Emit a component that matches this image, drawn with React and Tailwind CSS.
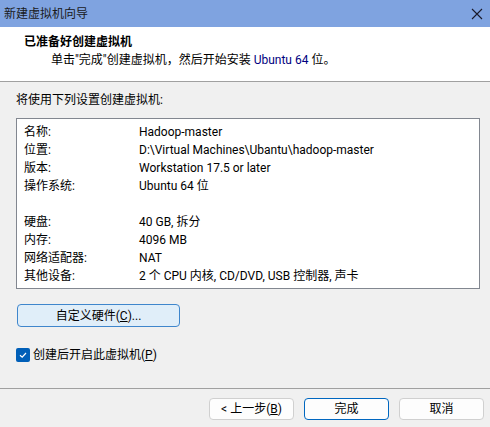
import React from "react";

const rows = [
  ["名称:", "Hadoop-master"],
  ["位置:", "D:\\Virtual Machines\\Ubantu\\hadoop-master"],
  ["版本:", "Workstation 17.5 or later"],
  ["操作系统:", "Ubuntu 64 位"],
  null,
  ["硬盘:", "40 GB, 拆分"],
  ["内存:", "4096 MB"],
  ["网络适配器:", "NAT"],
  ["其他设备:", "2 个 CPU 内核, CD/DVD, USB 控制器, 声卡"],
];

function Btn({ children, primary }) {
  return (
    <button
      className={
        primary
          ? "flex h-[22px] w-[85px] items-center justify-center rounded-[4px] border border-[#0067c0] bg-[#fdfdfd] text-[12px] text-black"
          : "flex h-[22px] w-[85px] items-center justify-center rounded-[4px] border border-[#d0d0d0] bg-[#fdfdfd] text-[12px] text-black"
      }
    >
      {children}
    </button>
  );
}

export default function App() {
  return (
    <div
      className="flex h-[427px] w-[490px] flex-col overflow-hidden bg-[#f0f0f0] text-[12px] text-black"
      style={{ fontFamily: 'Roboto, "Noto Sans CJK SC", sans-serif' }}
    >
      <div className="flex h-[27px] shrink-0 items-center justify-between bg-[#7fa3e0] pl-[4px] pr-[7px]">
        <span className="text-[12px] leading-none text-[#1a1a1a]">新建虚拟机向导</span>
        <svg width="12" height="12" viewBox="0 0 12 12">
          <path d="M1 1 L11 11 M11 1 L1 11" stroke="#1a1a2a" strokeWidth="1.1" />
        </svg>
      </div>

      <div className="h-[55px] shrink-0 border-b border-[#a0a0a0] bg-white pl-[24px] pt-[6px]">
        <div className="text-[12px] font-bold leading-[18px]">已准备好创建虚拟机</div>
        <div className="pl-[27px] text-[12px] leading-[18px]">
          单击"完成"创建虚拟机，然后开始安装 <span className="text-[#000080]">Ubuntu 64</span> 位。
        </div>
      </div>

      <div className="px-[16px] pt-[9px]">
        <div className="leading-[18px]">将使用下列设置创建虚拟机:</div>
        <div className="mt-[9px] h-[171px] w-[464px] border border-[#828790] bg-white px-[7px] pt-[4px]">
          {rows.map((r, i) =>
            r ? (
              <div key={i} className="flex h-[18px] items-center leading-[18px]">
                <span className="w-[115px] shrink-0">{r[0]}</span>
                <span>{r[1]}</span>
              </div>
            ) : (
              <div key={i} className="h-[18px]" />
            )
          )}
        </div>

        <button className="mt-[15px] ml-[1px] flex h-[23px] w-[163px] items-center justify-center rounded-[4px] border border-[#3f86cc] bg-[#e0eef9] text-[12px]">
          自定义硬件(<span className="underline">C</span>)...
        </button>

        <label className="mt-[19px] flex items-center gap-[3px]">
          <span className="flex h-[14px] w-[14px] items-center justify-center rounded-[2px] bg-[#005fb8]">
            <svg width="10" height="10" viewBox="0 0 10 10">
              <path d="M2 5.2 L4.2 7.2 L8 3" stroke="#fff" strokeWidth="1.2" fill="none" />
            </svg>
          </span>
          <span className="leading-[18px]">
            创建后开启此虚拟机(<span className="underline">P</span>)
          </span>
        </label>
      </div>

      <div className="mt-auto h-[39px] shrink-0 border-t border-[#a0a0a0]">
        <div className="flex justify-end gap-[10px] pr-[6px] pt-[9px]">
          <Btn>
            &lt; 上一步(<span className="underline">B</span>)
          </Btn>
          <Btn primary>完成</Btn>
          <Btn>取消</Btn>
        </div>
      </div>
    </div>
  );
}
